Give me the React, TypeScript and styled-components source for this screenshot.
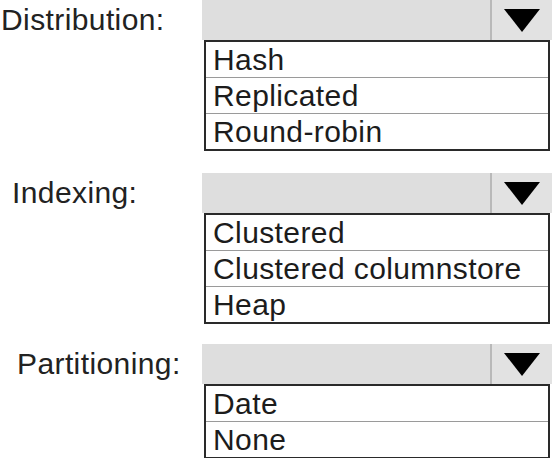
import React from "react";
import styled, { createGlobalStyle } from "styled-components";

const GlobalStyle = createGlobalStyle`
  html, body {
    margin: 0;
    padding: 0;
    background: #ffffff;
  }
  body {
    font-family: "Liberation Sans", Arial, sans-serif;
    color: #1e1e1e;
  }
`;

const Page = styled.div`
  width: 552px;
  height: 458px;
  overflow: hidden;
  display: flex;
  flex-direction: column;
`;

const Group = styled.div<{ $top: number }>`
  display: grid;
  grid-template-columns: 202px 350px;
  margin-top: ${(p) => p.$top}px;
`;

const Label = styled.div<{ $indent: number }>`
  height: 40px;
  display: flex;
  align-items: center;
  padding-left: ${(p) => p.$indent}px;
  font-size: 30px;
  letter-spacing: 0.4px;
  color: #222;
`;

const Field = styled.div`
  display: flex;
  flex-direction: column;
`;

const SelectBar = styled.div`
  height: 40px;
  display: flex;
  background: #dedede;
`;

const SelectValue = styled.div`
  flex: 1;
  border-right: 2px solid #b9b9b9;
`;

const ArrowButton = styled.div`
  width: 60px;
  display: flex;
  align-items: center;
  justify-content: center;
  background: #e2e2e2;
  padding-top: 1px;
  box-sizing: border-box;
`;

const ListBox = styled.div`
  margin: 0 2px;
  border: 2px solid #2a2a2a;
  background: #fff;
  display: flex;
  flex-direction: column;
`;

const Option = styled.div`
  height: 35px;
  line-height: 35px;
  padding-left: 7px;
  font-size: 30px;
  letter-spacing: 0.4px;
  color: #1c1c1c;
  white-space: nowrap;
  & + & {
    border-top: 1px solid #9a9a9a;
  }
`;

const Arrow = () => (
  <svg width="36" height="23" viewBox="0 0 36 23">
    <polygon points="0,0 36,0 18,23" fill="#000" />
  </svg>
);

const GROUPS = [
  { label: "Distribution:", indent: 1, top: 0, options: ["Hash", "Replicated", "Round-robin"] },
  { label: "Indexing:", indent: 12, top: 22, options: ["Clustered", "Clustered columnstore", "Heap"] },
  { label: "Partitioning:", indent: 17, top: 20, options: ["Date", "None"] },
];

const App = () => {
  return (
    <Page>
      <GlobalStyle />
      {GROUPS.map((group) => (
        <Group $top={group.top} key={group.label}>
          <Label $indent={group.indent}>{group.label}</Label>
          <Field>
            <SelectBar>
              <SelectValue />
              <ArrowButton>
                <Arrow />
              </ArrowButton>
            </SelectBar>
            <ListBox>
              {group.options.map((option) => (
                <Option key={option}>{option}</Option>
              ))}
            </ListBox>
          </Field>
        </Group>
      ))}
    </Page>
  );
};

export default App;
